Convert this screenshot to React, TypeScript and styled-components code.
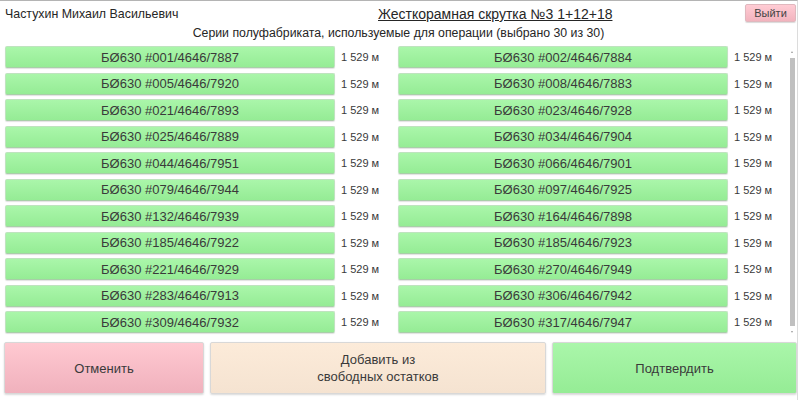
import React from 'react';
import styled, { createGlobalStyle } from 'styled-components';

const GlobalStyle = createGlobalStyle`
  html, body {
    margin: 0;
    padding: 0;
    background: #fff;
  }
  body {
    font-family: "Liberation Sans", Arial, sans-serif;
    color: #333;
  }
`

const Page = styled.div`
  width: 798px;
  height: 400px;
  box-sizing: border-box;
  border-top: 1px solid #b4b4b4;
  border-right: 1px solid #dcdcdc;
  display: flex;
  flex-direction: column;
  overflow: hidden;
`

const Header = styled.div`
  display: grid;
  grid-template-columns: 373px 1fr auto;
  align-items: center;
  height: 20px;
  padding: 3px 1px 0 5px;
  .name {
    font-size: 12.4px;
    color: #262626;
  }
  .title {
    font-size: 14px;
    color: #262626;
    text-decoration: underline;
  }
`

const ExitButton = styled.button`
  align-self: start;
  font-family: inherit;
  font-size: 11px;
  color: #444;
  width: 51px;
  height: 18px;
  padding: 0;
  border: 1px solid #e0b8be;
  border-radius: 2px;
  background: linear-gradient(#ffccd4, #f2b4be);
  box-shadow: 0 1px 1px rgba(0, 0, 0, 0.15);
  cursor: pointer;
`

const Caption = styled.div`
  text-align: center;
  font-size: 12.3px;
  color: #262626;
  height: 18px;
  line-height: 18px;
  margin-bottom: 3px;
`

const ListArea = styled.div`
  display: flex;
  height: 293px;
`

const List = styled.div`
  width: 787px;
  flex: none;
  overflow: hidden;
  display: grid;
  grid-template-columns: 393px 389px;
  grid-auto-rows: 22px;
  row-gap: 4.5px;
  align-content: start;
  padding: 1px 0 0 5px;
  box-sizing: border-box;
`

const ScrollTrack = styled.div`
  width: 10px;
  display: flex;
  flex-direction: column;
  align-items: center;
  padding: 6px 0 5px;
  box-sizing: border-box;
`

const Arrow = styled.span<{ $down?: boolean }>`
  width: 0;
  height: 0;
  border-left: 1.5px solid transparent;
  border-right: 1.5px solid transparent;
  ${p => (p.$down ? 'border-top' : 'border-bottom')}: 2px solid #9a9a9a;
`

const Thumb = styled.div`
  width: 5px;
  flex: 1;
  margin: 5px 0;
  background: #c0c0c0;
`

const Item = styled.div`
  display: flex;
  align-items: center;
  gap: 6px;
`

const Series = styled.button`
  width: 330px;
  height: 22px;
  flex: none;
  padding: 0;
  font-family: inherit;
  font-size: 13px;
  color: #3a3a3a;
  border: 1px solid #bfe3bf;
  border-bottom-color: #a8cfa8;
  border-radius: 2px;
  background: linear-gradient(#aaf6aa, #95ec95);
  box-shadow: 0 1px 1px rgba(0, 0, 0, 0.12);
  cursor: pointer;
`

const Length = styled.span`
  font-size: 11px;
  color: #3a3a3a;
  white-space: nowrap;
`

const Footer = styled.div`
  display: grid;
  grid-template-columns: 200px 336px 1fr;
  gap: 6px;
  padding: 4px 0 0 4px;
  height: 52px;
`

const BigButton = styled.button<{ $tone: 'cancel' | 'add' | 'ok' }>`
  font-family: inherit;
  font-size: 13px;
  color: #3a3a3a;
  padding: 0;
  border: 1px solid #d8d8d8;
  border-radius: 2px;
  box-shadow: 0 1px 2px rgba(0, 0, 0, 0.15);
  cursor: pointer;
  background: ${p =>
    p.$tone === 'cancel'
      ? 'linear-gradient(#ffc9d1, #f0b1bd)'
      : p.$tone === 'add'
      ? 'linear-gradient(#fcebd9, #f5e3d1)'
      : 'linear-gradient(#aaf6aa, #95ec95)'};
  span {
    display: block;
    line-height: 17px;
  }
`

const items: string[][] = [
  ['#001/4646/7887', '#002/4646/7884'],
  ['#005/4646/7920', '#008/4646/7883'],
  ['#021/4646/7893', '#023/4646/7928'],
  ['#025/4646/7889', '#034/4646/7904'],
  ['#044/4646/7951', '#066/4646/7901'],
  ['#079/4646/7944', '#097/4646/7925'],
  ['#132/4646/7939', '#164/4646/7898'],
  ['#185/4646/7922', '#185/4646/7923'],
  ['#221/4646/7929', '#270/4646/7949'],
  ['#283/4646/7913', '#306/4646/7942'],
  ['#309/4646/7932', '#317/4646/7947'],
  ['#321/4646/7936', '#328/4646/7918'],
  ['#334/4646/7941', '#347/4646/7909'],
  ['#352/4646/7927', '#366/4646/7915'],
  ['#371/4646/7938', '#389/4646/7906'],
]

function App() {
  return (
    <>
      <GlobalStyle />
      <Page>
        <Header>
          <span className='name'>Частухин Михаил Васильевич</span>
          <span className='title'>Жесткорамная скрутка №3 1+12+18</span>
          <ExitButton>Выйти</ExitButton>
        </Header>
        <Caption>Серии полуфабриката, используемые для операции (выбрано 30 из 30)</Caption>
        <ListArea>
          <List>
            {items.flat().map((s, i) => (
              <Item key={i}>
                <Series>БØ630 {s}</Series>
                <Length>1 529 м</Length>
              </Item>
            ))}
          </List>
          <ScrollTrack>
            <Arrow />
            <Thumb />
            <Arrow $down />
          </ScrollTrack>
        </ListArea>
        <Footer>
          <BigButton $tone='cancel'><span>Отменить</span></BigButton>
          <BigButton $tone='add'><span>Добавить из</span><span>свободных остатков</span></BigButton>
          <BigButton $tone='ok'><span>Подтвердить</span></BigButton>
        </Footer>
      </Page>
    </>
  );
}

export default App;
